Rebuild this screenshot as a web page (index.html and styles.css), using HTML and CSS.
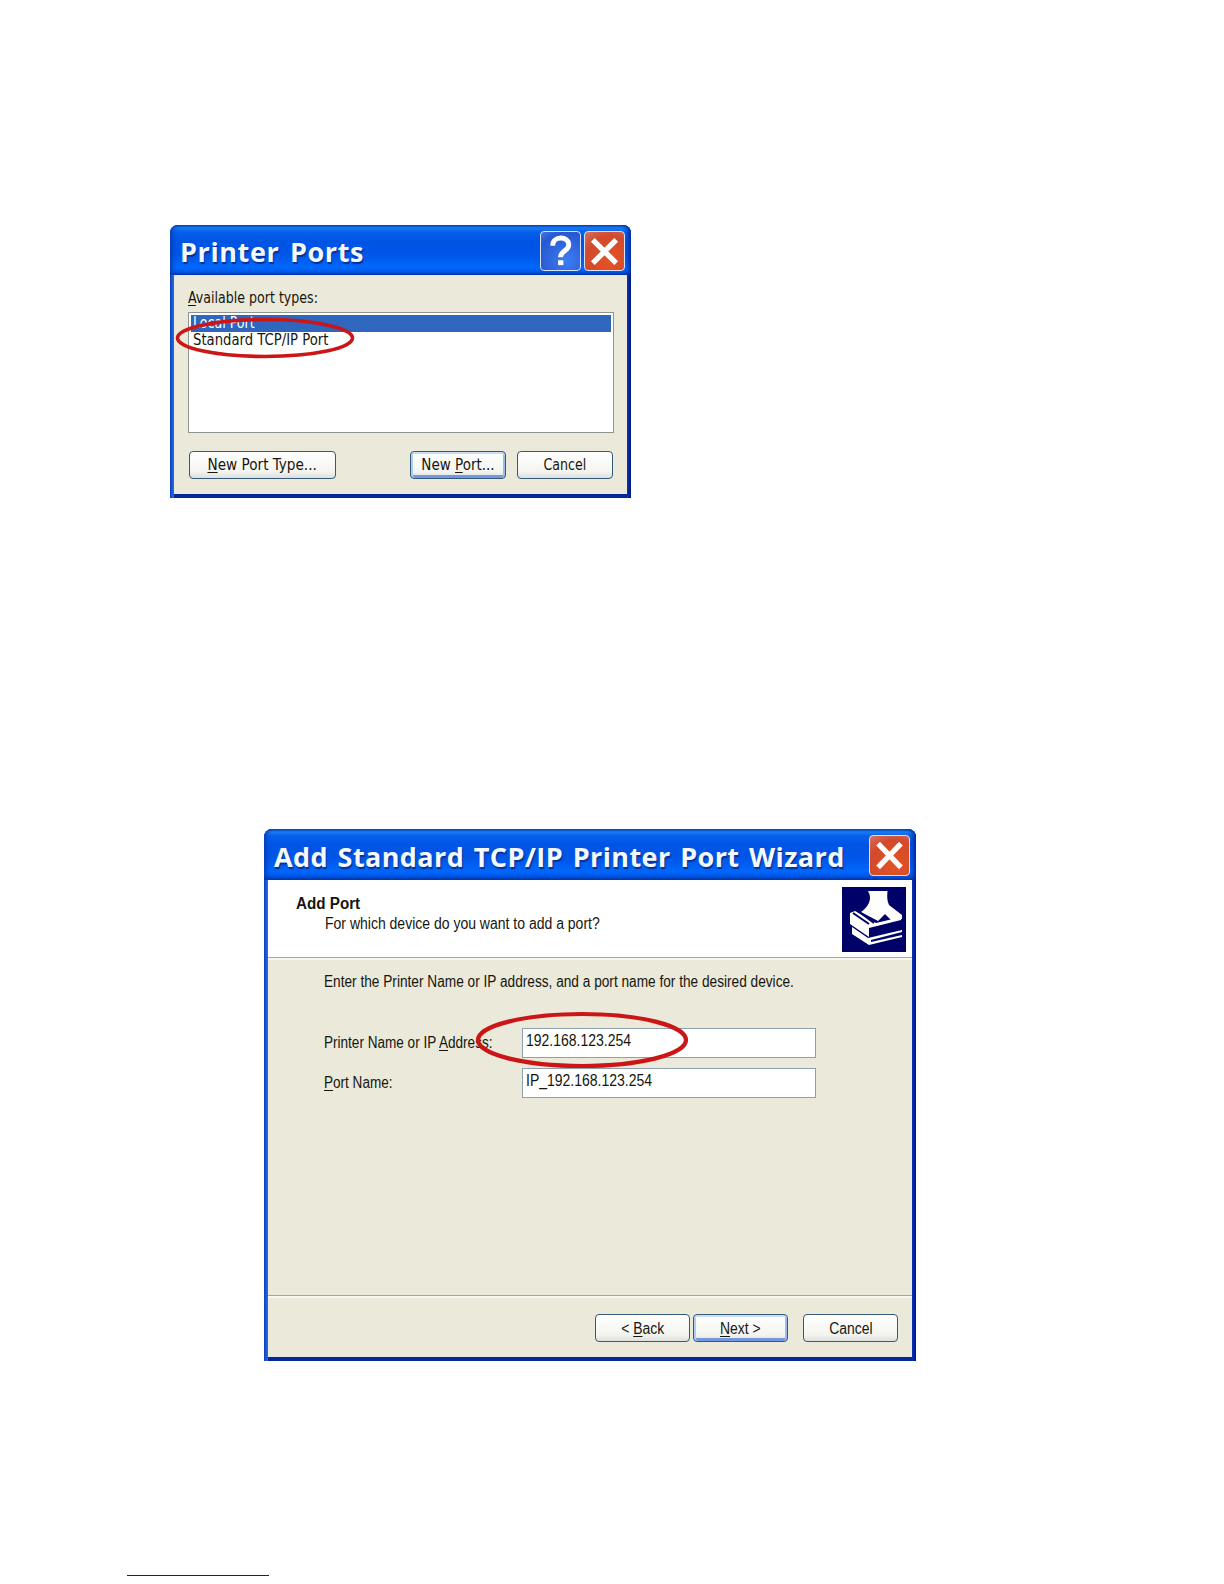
FILE: index.html
```
<!DOCTYPE html>
<html lang="en">
<head>
<meta charset="utf-8">
<title>Printer port setup</title>
<link rel="stylesheet" href="styles.css">
</head>
<body>
<main class="page">
  <section class="window ports">
    <header class="titlebar">
      <h1 class="title"><span class="fit t-ports">Printer Ports</span></h1>
      <span class="caption-btn help"><svg viewBox="0 0 40 39"><path d="M12 14C12 3.500 28.500 4 28.500 13C28.500 19.500 20 19 20 26" fill="none" stroke="#fff" stroke-width="5"/><path d="M17.500 29h5.500v5h-5.500z" fill="#fff"/></svg></span>
      <span class="caption-btn close"><svg viewBox="0 0 40 39"><path d="M8 8L32 32M32 8L8 32" fill="none" stroke="#fff" stroke-width="5.500"/></svg></span>
    </header>
    <div class="ports-body">
      <div class="ports-label"><span class="fit t-types"><u>A</u>vailable port types:</span></div>
      <div class="list">
        <div class="row selected"><span class="fit t-local">Local Port</span></div>
        <div class="row"><span class="fit t-standard">Standard TCP/IP Port</span></div>
      </div>
      <div class="ports-actions">
        <div class="btn type-btn"><span class="fit t-type"><u>N</u>ew Port Type...</span></div>
        <div class="btn default"><span class="fit t-new">New <u>P</u>ort...</span></div>
        <div class="btn"><span class="fit t-cancel1">Cancel</span></div>
      </div>
    </div>
    <svg class="mark mark-ports" viewBox="0 0 180 42"><ellipse cx="90" cy="21" rx="87.500" ry="18.500"/></svg>
  </section>

  <section class="window wizard">
    <header class="titlebar">
      <h1 class="title"><span class="fit t-wizard">Add Standard TCP/IP Printer Port Wizard</span></h1>
      <span class="caption-btn close"><svg viewBox="0 0 40 41"><path d="M8 8L32 33M32 8L8 33" fill="none" stroke="#fff" stroke-width="5.500"/></svg></span>
    </header>
    <div class="wizard-head">
      <div class="wizard-heading">
        <h2><span class="fit t-add">Add Port</span></h2>
        <p><span class="fit t-for">For which device do you want to add a port?</span></p>
      </div>
      <svg class="printer" viewBox="0 0 64 65">
        <path fill="#000069" d="M0 0h64v65H0z"/>
        <path fill="#fff" d="M26 4H45.500C45 9 45 14 47 18L60 28V32L49 33L43 27L36 34L19 25C26 20 31 12 26 4Z"/>
        <path fill="#fff" d="M8 26L13 24L34 36L59 30V33L27 41V50L8 37Z"/>
        <path fill="#fff" d="M10 40L26 51L60 43V45L29 53V55L60 48V50L27 58L10 47Z"/>
        <path fill="none" stroke="#000069" stroke-width="2" d="M11 26L27 37M16 24L32 36"/>
      </svg>
    </div>
    <div class="wizard-body">
      <p class="intro"><span class="fit t-enter">Enter the Printer Name or IP address, and a port name for the desired device.</span></p>
      <div class="field"><label><span class="fit t-address">Printer Name or IP <u>A</u>ddress:</span></label><div class="input"><span class="fit t-ip">192.168.123.254</span></div></div>
      <div class="field"><label><span class="fit t-port"><u>P</u>ort Name:</span></label><div class="input"><span class="fit t-ip">IP_192.168.123.254</span></div></div>
    </div>
    <footer class="wizard-actions">
      <div class="btn"><span class="fit t-nav">&lt; <u>B</u>ack</span></div>
      <div class="btn default"><span class="fit t-nav"><u>N</u>ext &gt;</span></div>
      <div class="btn last"><span class="fit t-nav">Cancel</span></div>
    </footer>
    <svg class="mark mark-wizard" viewBox="0 0 214 58"><ellipse cx="107" cy="29" rx="104" ry="26"/></svg>
  </section>
  <div class="link-rule"></div>
</main>
</body>
</html>
```
FILE: styles.css
```
* { box-sizing: border-box; }
body { margin: 0; background: #fff; color: #16160f; }
h1, h2, p { margin: 0; font-weight: normal; }
u { text-underline-offset: 2px; text-decoration-thickness: 1px; }
.page { height: 1584px; padding-top: 225px; overflow: hidden; }
.fit { display: inline-block; white-space: nowrap; transform-origin: left center; }
.btn .fit { transform-origin: center; }
.t-ports { letter-spacing: .6px; word-spacing: 3px; }
.t-wizard { letter-spacing: .4px; word-spacing: 2.2px; }
.t-types, .t-local, .t-cancel1 { transform: scaleX(.935); }
.t-standard { transform: scaleX(.98); }
.t-type { transform: scaleX(1.01); }
.t-add { transform: scaleX(.95); }
.t-for, .t-ip { transform: scaleX(.875); }
.t-enter { transform: scaleX(.854); }
.t-address, .t-port { transform: scaleX(.847); }
.btn .t-nav { padding-top: 2px; transform: scaleX(.87); }

.window {
  position: relative;
  display: flex;
  flex-direction: column;
  padding: 0 4px 4px;
  border-radius: 8px 8px 0 0;
  background: linear-gradient(90deg, #0a3fc0, #2464e0 3px, #2464e0 4px, transparent 4px),
    linear-gradient(270deg, #001878, #0634b8 4px, transparent 4px), #04279a;
}
.titlebar {
  display: flex;
  flex: none;
  margin: 0 -4px;
  padding: 6px 6px 0 10px;
  border-radius: 8px 8px 0 0;
  background: linear-gradient(180deg, #0644bd 0, #1a7bf5 3px, #0660ea 7px, #0054e4 16px, #0056e9 30px, #0067fb 42px, #005cf0 46px, #0038ae 100%);
  box-shadow: inset 5px 0 5px -3px #0639b2, inset -5px 0 5px -3px #00208c;
}
.title { flex: 1; color: #f4f8ff; font: bold 27px/41px "Open Sans", sans-serif; text-shadow: 1px 2px 1px #073196; white-space: nowrap; }
.caption-btn { flex: none; width: 41px; height: 40px; border: 1.5px solid #d8e1fa; border-radius: 4px; }
.caption-btn svg { display: block; width: 100%; height: 100%; overflow: visible; }
.help { margin-right: 3px; background: radial-gradient(circle at 65% 75%, #3c7cf4, #2858cf 75%, #4d78d8); }
.close { background: radial-gradient(circle at 65% 75%, #e35424, #d2492c 65%, #d57565); }

.btn {
  display: flex;
  align-items: center;
  justify-content: center;
  height: 28px;
  border: 1.5px solid #345979;
  border-radius: 4px;
  background: linear-gradient(#fff, #f4f4ef 75%, #dedfdf);
}
.default { box-shadow: inset 0 2px #cadcf8, inset 2px 0 #b2cbf3, inset -2px 0 #9bb9eb, inset 0 -3px #7498dd; }

.mark { position: absolute; fill: none; stroke: #cb1517; }

.ports { width: 461px; height: 273px; margin-left: 170px; font: 15px/18px "DejaVu Sans Condensed", "DejaVu Sans", sans-serif; font-stretch: condensed; }
.ports .titlebar { height: 50px; }
.ports-body { flex: 1; padding: 14px 14px 0 14px; background: #ebe9d9; }
.ports-label { height: 23px; }
.list { width: 426px; height: 121px; padding: 2px; border: 1px solid #8c958e; background: #fff; }
.row { height: 17px; padding-left: 2px; line-height: 17px; }
.selected { background: #2e67bd; color: #fff; }
.ports-actions { display: flex; margin-top: 18px; padding-left: 1px; gap: 11px; }
.ports-actions .btn { width: 96px; }
.ports-actions .type-btn { width: 147px; margin-right: 63px; }
.mark-ports { left: 5px; top: 92px; width: 180px; height: 42px; stroke-width: 3.6; }

.wizard { width: 652px; height: 532px; margin: 331px 0 0 264px; font: 16px/20px "Liberation Sans", sans-serif; }
.wizard .titlebar { height: 51px; }
.wizard .title { line-height: 43px; }
.wizard .caption-btn { height: 41px; }
.wizard-head { display: flex; justify-content: space-between; height: 78px; padding: 7px 6px 0 28px; border-bottom: 1px solid #aca998; background: #fff; }
.wizard-head h2 { padding-top: 7px; font-size: 16px; font-weight: bold; line-height: 20px; }
.wizard-head p { padding-left: 29px; }
.printer { width: 64px; height: 65px; }
.wizard-body { flex: 1; padding: 12px 96px 0 56px; border-top: 2px solid #f8f7ef; background: #ebe9d9; }
.intro { height: 56px; }
.field { display: flex; height: 30px; margin-bottom: 10px; }
.field label { width: 198px; padding-top: 5px; }
.input { flex: 1; padding: 2px 0 0 3px; border: 1px solid #8ca0ad; background: #fff; }
.wizard-actions { display: flex; gap: 3px; height: 62px; padding: 18px 14px 0 0; justify-content: flex-end; border-top: 1px solid #aaa999; background: #ebe9d9; box-shadow: inset 0 2px #f8f7ef; }
.wizard-actions .btn { width: 95px; height: 28px; }
.wizard-actions .last { margin-left: 12px; }
.mark-wizard { left: 211px; top: 182px; width: 214px; height: 58px; stroke-width: 4.2; }

.link-rule { width: 142px; height: 1px; margin: 214px 0 0 127px; background: #17177c; }
```
